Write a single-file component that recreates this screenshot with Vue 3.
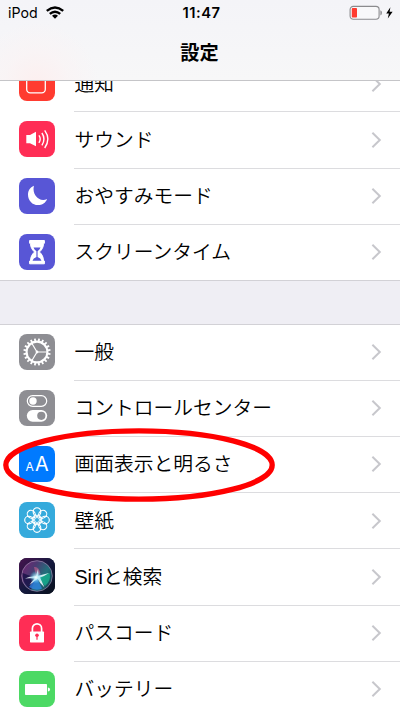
<script setup>
const groups = [
  [
    { id: 'notify', label: '通知', color: '#ff3b30' },
    { id: 'sound', label: 'サウンド', color: '#ff2d55' },
    { id: 'moon', label: 'おやすみモード', color: '#5856d6' },
    { id: 'time', label: 'スクリーンタイム', color: '#5856d6' },
  ],
  [
    { id: 'general', label: '一般', color: '#8e8e93' },
    { id: 'control', label: 'コントロールセンター', color: '#8e8e93' },
    { id: 'display', label: '画面表示と明るさ', color: '#007aff', marked: true },
    { id: 'wallpaper', label: '壁紙', color: '#35aadc' },
    { id: 'siri', label: 'Siriと検索', color: '#15142e' },
    { id: 'passcode', label: 'パスコード', color: '#ff2d55' },
    { id: 'battery', label: 'バッテリー', color: '#4cd964' },
  ],
]
const teeth = Array.from({ length: 20 }, (_, i) => i * 18)
const petals = Array.from({ length: 8 }, (_, i) => i * 45)
</script>

<template>
  <div class="screen">
    <header class="header">
      <div class="status">
        <div class="carrier">
          <span>iPod</span>
          <svg class="wifi" width="18" height="13" viewBox="0 0 18 13">
            <g fill="none" stroke="#000" stroke-width="2.4">
              <path d="M.8 4.8Q9-2 17.2 4.8" />
              <path d="M3.8 7.9Q9 3.4 14.2 7.9" />
            </g>
            <path d="M6 9.8Q9 7.4 12 9.8L9 12.8Z" />
          </svg>
        </div>
        <span class="clock">11:47</span>
        <div class="power">
          <svg width="46" height="16" viewBox="0 0 46 16">
            <rect x="1.1" y="1.4" width="29" height="12.8" rx="3.2" fill="#f8f8fa" stroke="#8b8b8e" stroke-width="1.1" />
            <rect x="2.8" y="3.1" width="5.2" height="9.4" rx=".8" fill="#ff3b30" />
            <path d="M31.4 5.2Q33 5.7 33 7.8T31.4 10.4Z" fill="#8b8b8e" />
            <path d="M41.4 2.2L37.2 8.6H39.9L38.8 13.4L43.6 6.8H40.6Z" />
          </svg>
        </div>
      </div>
      <h1>設定</h1>
    </header>
    <main class="content">
      <ul v-for="(group, gi) in groups" :key="gi" class="group">
        <li v-for="item in group" :key="item.id" class="row">
          <svg class="icon" viewBox="0 0 36 36" :style="{ background: item.color }">
            <rect v-if="item.id === 'notify'" x="7.7" y="9.4" width="18.6" height="18.4" rx="3.6" fill="none" stroke="#fff" stroke-width="1.3" />
            <g v-else-if="item.id === 'sound'">
              <path d="M7.3 14H11L17 10.8V25.3L11 22.2H7.3Z" fill="#fff" />
              <g fill="none" stroke="#fff" stroke-width="1.4">
                <path d="M19.9 14.4Q22.5 18 19.9 21.8" />
                <path d="M22.9 12Q27 18 22.9 24.4" />
                <path d="M25.7 9.4Q32 18 25.7 27" />
              </g>
            </g>
            <path v-else-if="item.id === 'moon'" d="M14.9 7.7C11.1 9.2 9 12.6 9 16.7C9 22.5 13.4 27.1 19 27.1C23.3 27.1 26.6 24.8 28.1 20.9C21.2 24.6 12.6 17.5 14.9 7.7Z" fill="#fff" />
            <g v-else-if="item.id === 'time'">
              <path d="M10.6 6.5H25.4V9.3H24.5C24.5 13.4 22.9 15.8 20.4 18C22.9 20.2 24.5 22.9 24.5 27H25.4V29.8H10.6V27H11.5C11.5 22.9 13.1 20.2 15.6 18C13.1 15.8 11.5 13.4 11.5 9.3H10.6Z" fill="#fff" stroke="#fff" stroke-linejoin="round" />
              <path d="M14.5 13.5H21.5Q20.8 15.6 18.6 17.2V23.1Q21.8 24.3 22.5 26.7H13.5Q14.2 24.3 17.4 23.1V17.2Q15.2 15.6 14.5 13.5Z" :fill="item.color" />
            </g>
            <g v-else-if="item.id === 'general'" stroke="#fff" fill="none">
              <circle cx="18" cy="18" r="10.4" stroke-width="2.1" />
              <path v-for="a in teeth" :key="a" d="M18 7.3V4.4" stroke-width="1.8" :transform="`rotate(${a + 9} 18 18)`" />
              <path d="M18 18H28M18 18L12.8 9.3M18 18L12.8 26.7" stroke-width="1.2" />
              <circle cx="18" cy="18" r="1.4" fill="#fff" stroke="none" />
            </g>
            <g v-else-if="item.id === 'control'">
              <rect x="8.3" y="5.7" width="19.4" height="10.6" rx="5.3" fill="none" stroke="#fff" stroke-width="1.2" />
              <circle cx="14" cy="11" r="3.7" fill="#fff" />
              <rect x="7.8" y="20" width="20.4" height="11.7" rx="5.85" fill="#fff" />
              <circle cx="22.3" cy="25.8" r="4.1" :fill="item.color" />
            </g>
            <g v-else-if="item.id === 'display'" class="letters" fill="#fff">
              <text x="6.5" y="24.6" font-size="12">A</text>
              <text x="16" y="24.6" font-size="19.8">A</text>
            </g>
            <g v-else-if="item.id === 'wallpaper'" fill="none" stroke="#fff" stroke-width="1.15">
              <ellipse v-for="a in petals" :key="a" cx="18" cy="9.9" rx="3.8" ry="4.2" :transform="`rotate(${a} 18 18)`" />
              <circle v-for="a in petals" :key="`c${a}`" cx="18" cy="14.1" r="1.65" stroke-width=".8" :transform="`rotate(${a + 22.5} 18 18)`" />
            </g>
            <g v-else-if="item.id === 'siri'">
              <defs>
                <linearGradient id="siriBase" x1="0" y1="0" x2="1" y2="1">
                  <stop offset="0" stop-color="#48134f" /><stop offset=".5" stop-color="#15193f" /><stop offset="1" stop-color="#07101b" />
                </linearGradient>
                <linearGradient id="siriOrb" x1="0" y1="0" x2="1" y2=".6">
                  <stop offset="0" stop-color="#7a2273" /><stop offset=".4" stop-color="#4b3a72" /><stop offset=".75" stop-color="#22707c" /><stop offset="1" stop-color="#164f5b" />
                </linearGradient>
                <radialGradient id="siriGlow">
                  <stop offset="0" stop-color="#fff" /><stop offset=".35" stop-color="#b9f1ff" stop-opacity=".7" /><stop offset="1" stop-color="#35b9ed" stop-opacity="0" />
                </radialGradient>
              </defs>
              <rect width="36" height="36" fill="url(#siriBase)" />
              <circle cx="18" cy="18" r="15.3" fill="url(#siriOrb)" stroke="#a28ab1" stroke-width=".7" />
              <path d="M3.5 15Q3.5 27 12 31.5L17 20Z" fill="#1a1348" opacity=".85" />
              <path d="M17.5 19L10 29Q17 33.5 23 30.5Z" fill="#2f86e8" opacity=".75" />
              <path d="M18 19L30.5 15Q32.5 23 26 28Z" fill="#16b08f" opacity=".8" />
              <path d="M17 18L15 9Q20 8 21.5 16Z" fill="#c9608f" opacity=".6" />
              <path d="M6 20.6Q12 17.6 17 18.3L19 11Q19.6 15 19.2 17.7L30 15Q26 17.8 21 19.6L25.5 29.5Q20.8 25.5 18.6 20.8L10.5 27Q12.5 23.5 15.5 20.4Q10 19.8 6 20.6Z" fill="#eefaff" opacity=".88" />
              <circle cx="17" cy="19.3" r="6.5" fill="url(#siriGlow)" />
            </g>
            <g v-else-if="item.id === 'passcode'">
              <path d="M13.4 17V13.4A4.6 4.6 0 0 1 22.6 13.4V17" fill="none" stroke="#fff" stroke-width="1.7" />
              <rect x="11" y="16.6" width="14" height="10.8" rx=".6" fill="#fff" />
              <circle cx="18" cy="20.3" r="1.8" :fill="item.color" />
              <path d="M17.4 20.5H18.6V24.8H17.4Z" :fill="item.color" />
            </g>
            <g v-else fill="#fff">
              <rect x="6" y="13" width="22" height="11" rx=".8" />
              <path d="M28.9 16.5Q31 16.6 31 18.5T28.9 20.5Z" />
            </g>
          </svg>
          <div class="cell">
            <span class="label">{{ item.label }}</span>
            <svg class="chevron" width="11" height="18" viewBox="0 0 11 18">
              <path d="M1.4 1.8L8.8 9L1.4 16.2" fill="none" stroke="#c7c7cc" stroke-width="2" />
            </svg>
          </div>
          <svg v-if="item.marked" class="marker" width="274" height="76" viewBox="0 0 274 76">
            <ellipse cx="137" cy="38" rx="133.2" ry="34.2" fill="none" stroke="#f00" stroke-width="5.3" />
          </svg>
        </li>
      </ul>
    </main>
  </div>
</template>

<style>
body {
  margin: 0;
}
</style>

<style scoped>
.screen {
  width: 400px;
  height: 710px;
  overflow: hidden;
  display: flex;
  flex-direction: column;
  background: #efeef4;
  color: #000;
  font-family: Inter, "Noto Sans CJK JP", sans-serif;
}
.header {
  flex: none;
  box-sizing: border-box;
  height: 81px;
  border-bottom: 1px solid #c5c5c8;
  background: radial-gradient(circle at 37px 84px, #fcefef 0, rgba(250, 243, 244, .7) 32px, rgba(247, 247, 248, 0) 62px), linear-gradient(#f4f4f8, #f7f7f8);
}
.status {
  display: grid;
  grid-template-columns: 1fr auto 1fr;
  align-items: center;
  height: 26px;
  padding: 0 5px 0 8px;
}
.carrier {
  display: flex;
  align-items: center;
  gap: 8px;
  font-size: 14.2px;
  line-height: 26px;
}
.wifi {
  margin-bottom: 2px;
}
.clock {
  font-size: 14.8px;
  font-weight: 600;
  letter-spacing: .5px;
  line-height: 26px;
}
.power {
  display: flex;
  justify-content: flex-end;
}
h1 {
  margin: 0;
  padding-right: 1px;
  text-align: center;
  font: 700 19.2px/53px "Noto Sans CJK JP", sans-serif;
}
.content {
  flex: 1;
  min-height: 0;
  overflow: hidden;
}
.group {
  list-style: none;
  margin: 0;
  padding: 0;
  background: #fff;
  border-bottom: 1px solid #d2d1d6;
}
.group:first-child {
  height: 224px;
  margin-top: -25px;
}
.group + .group {
  margin-top: 43px;
  border-top: 1px solid #d2d1d6;
}
.group + .group .row:first-child {
  height: 55.5px;
}
.row {
  position: relative;
  display: flex;
  align-items: center;
  height: 56.25px;
  padding-left: 19px;
}
.icon {
  flex: none;
  width: 36px;
  height: 36px;
  margin-bottom: 2px;
  border-radius: 8px;
}
.letters {
  font-family: Inter, sans-serif;
}
.cell {
  flex: 1;
  box-sizing: border-box;
  display: flex;
  align-items: center;
  justify-content: space-between;
  height: 100%;
  margin-left: 19px;
  padding-right: 18px;
  border-bottom: 1px solid #dcdcdf;
}
.row:last-child .cell {
  border-bottom-color: transparent;
}
.label {
  padding-left: .4px;
  font: 350 19.75px/30px "Liberation Sans", "Noto Sans CJK JP", sans-serif;
}
.marker {
  position: absolute;
  left: 2px;
  top: -10px;
}
</style>
